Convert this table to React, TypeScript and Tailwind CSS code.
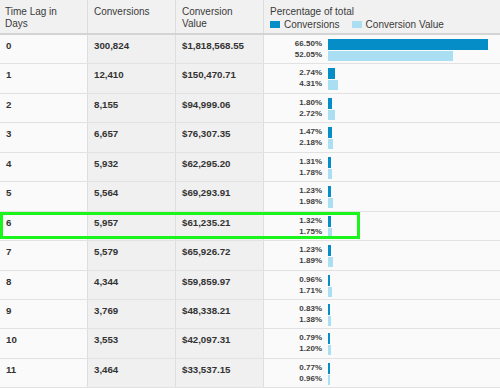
import React from 'react';

type Row = {
  lag: string;
  conversions: string;
  value: string;
  convPct: number;
  valuePct: number;
};

const rows: Row[] = [
  { lag: '0', conversions: '300,824', value: '$1,818,568.55', convPct: 66.5, valuePct: 52.05 },
  { lag: '1', conversions: '12,410', value: '$150,470.71', convPct: 2.74, valuePct: 4.31 },
  { lag: '2', conversions: '8,155', value: '$94,999.06', convPct: 1.8, valuePct: 2.72 },
  { lag: '3', conversions: '6,657', value: '$76,307.35', convPct: 1.47, valuePct: 2.18 },
  { lag: '4', conversions: '5,932', value: '$62,295.20', convPct: 1.31, valuePct: 1.78 },
  { lag: '5', conversions: '5,564', value: '$69,293.91', convPct: 1.23, valuePct: 1.98 },
  { lag: '6', conversions: '5,957', value: '$61,235.21', convPct: 1.32, valuePct: 1.75 },
  { lag: '7', conversions: '5,579', value: '$65,926.72', convPct: 1.23, valuePct: 1.89 },
  { lag: '8', conversions: '4,344', value: '$59,859.97', convPct: 0.96, valuePct: 1.71 },
  { lag: '9', conversions: '3,769', value: '$48,338.21', convPct: 0.83, valuePct: 1.38 },
  { lag: '10', conversions: '3,553', value: '$42,097.31', convPct: 0.79, valuePct: 1.2 },
  { lag: '11', conversions: '3,464', value: '$33,537.15', convPct: 0.77, valuePct: 0.96 },
];

const PX_PER_PCT = 2.4;
const barWidth = (pct: number) => Math.max(2, pct * PX_PER_PCT);

const PercentCell = ({ convPct, valuePct }: { convPct: number; valuePct: number }) => (
  <div className="flex h-full">
    <div className="w-[58px] pt-[3px] text-right text-[8px] font-bold leading-[11px] text-[#3d3d3d]">
      <div>{convPct.toFixed(2)}%</div>
      <div>{valuePct.toFixed(2)}%</div>
    </div>
    <div className="ml-[6px] pt-[4px]">
      <div className="h-[11px] bg-[#058dc7]" style={{ width: barWidth(convPct) }} />
      <div className="mt-px h-[10px] bg-[#aadff3]" style={{ width: barWidth(valuePct) }} />
    </div>
  </div>
);

export default function App() {
  return (
    <div
      className="relative h-[388px] w-[500px] overflow-hidden bg-[#f9f9f9] text-[#333]"
      style={{ fontFamily: '"Liberation Sans", Arial, sans-serif' }}
    >
      <div className="grid h-[35px] grid-cols-[88px_88px_88px_1fr] border-b-2 border-[#d4d4d4] bg-[#f1f1f1] text-[10px] leading-[11.5px] text-[#3a3a3a]">
        <div className="border-r border-[#dcdcdc] pl-[5px] pt-[6px]">
          Time Lag in
          <br />
          Days
        </div>
        <div className="border-r border-[#dcdcdc] pl-[6px] pt-[6px]">Conversions</div>
        <div className="border-r border-[#dcdcdc] pl-[6px] pt-[6px]">
          Conversion
          <br />
          Value
        </div>
        <div className="pl-[6px] pt-[6px]">
          <div>Percentage of total</div>
          <div className="mt-[1.5px] flex items-center">
            <span className="h-[7px] w-[10px] bg-[#058dc7]" />
            <span className="ml-[4px]">Conversions</span>
            <span className="ml-[12px] h-[7px] w-[10px] bg-[#aadff3]" />
            <span className="ml-[4px]">Conversion Value</span>
          </div>
        </div>
      </div>

      {rows.map((row) => (
        <div
          key={row.lag}
          className="grid h-[29.45px] grid-cols-[88px_88px_88px_1fr] border-b border-[#e2e2e2] text-[9.7px] font-bold leading-[12px]"
        >
          <div className="border-r border-[#dedede] bg-[#fafafa] pl-[6px] pt-[5px]">{row.lag}</div>
          <div className="border-r border-[#dedede] bg-[#f0f0f0] pl-[6px] pt-[5px]">{row.conversions}</div>
          <div className="border-r border-[#dedede] bg-[#f0f0f0] pl-[6px] pt-[5px]">{row.value}</div>
          <div className="bg-[#fafafa]">
            <PercentCell convPct={row.convPct} valuePct={row.valuePct} />
          </div>
        </div>
      ))}

      <div className="absolute left-0 top-[212px] h-[27px] w-[360px] border-[3px] border-[#1cf51c]" />
    </div>
  );
}
